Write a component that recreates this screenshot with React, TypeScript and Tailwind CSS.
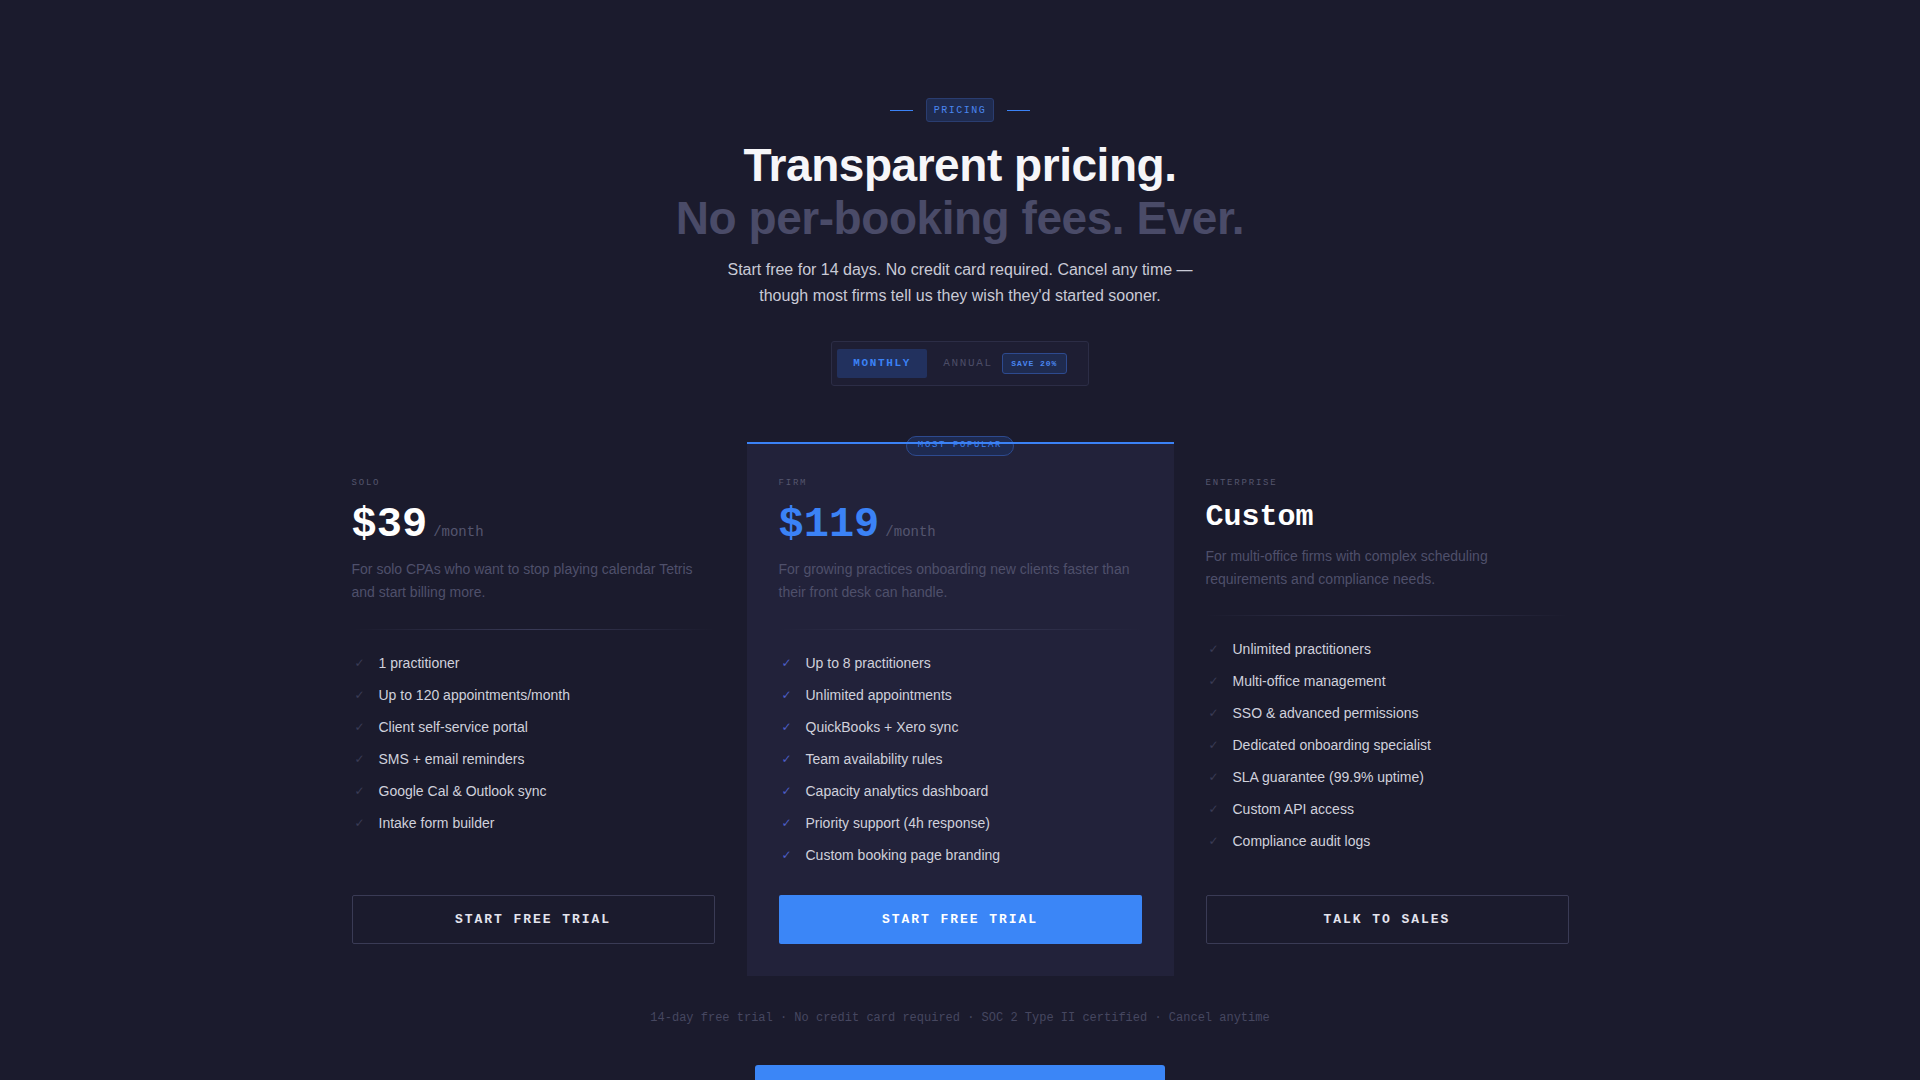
import clsx from "clsx";

type Plan = {
  tier: string;
  price: string;
  per?: string;
  desc: string;
  features: string[];
  cta: string;
  featured?: boolean;
};

const plans: Plan[] = [
  {
    tier: "SOLO",
    price: "$39",
    per: "/month",
    desc: "For solo CPAs who want to stop playing calendar Tetris and start billing more.",
    features: [
      "1 practitioner",
      "Up to 120 appointments/month",
      "Client self-service portal",
      "SMS + email reminders",
      "Google Cal & Outlook sync",
      "Intake form builder",
    ],
    cta: "START FREE TRIAL",
  },
  {
    tier: "FIRM",
    price: "$119",
    per: "/month",
    desc: "For growing practices onboarding new clients faster than their front desk can handle.",
    features: [
      "Up to 8 practitioners",
      "Unlimited appointments",
      "QuickBooks + Xero sync",
      "Team availability rules",
      "Capacity analytics dashboard",
      "Priority support (4h response)",
      "Custom booking page branding",
    ],
    cta: "START FREE TRIAL",
    featured: true,
  },
  {
    tier: "ENTERPRISE",
    price: "Custom",
    desc: "For multi-office firms with complex scheduling requirements and compliance needs.",
    features: [
      "Unlimited practitioners",
      "Multi-office management",
      "SSO & advanced permissions",
      "Dedicated onboarding specialist",
      "SLA guarantee (99.9% uptime)",
      "Custom API access",
      "Compliance audit logs",
    ],
    cta: "TALK TO SALES",
  },
];

const mono = "font-['Liberation_Mono',monospace]";

function PlanCard({ plan }: { plan: Plan }) {
  const custom = !plan.per;
  return (
    <div className={clsx("relative flex flex-col px-8 pb-8 pt-[34px]", plan.featured && "bg-[#22223a]")}>
      {plan.featured && (
        <>
          <div className="absolute left-0 right-0 top-0 z-10 h-[2px] bg-[#3b82f6]" />
          <div
            className={clsx(
              mono,
              "absolute left-1/2 top-[-6px] flex h-5 w-[108px] -translate-x-1/2 items-center justify-center rounded-full border border-[#2d4a8f] bg-[#1e2a50] text-[9px] tracking-[0.18em] text-[#3b82f6]"
            )}
          >
            MOST POPULAR
          </div>
        </>
      )}

      <div className={clsx(mono, "text-[9px] leading-[14px] tracking-[0.2em] text-[#55566e]")}>
        {plan.tier}
      </div>

      {custom ? (
        <div className={clsx(mono, "mt-[9px] text-[30px] font-bold leading-[36px] text-white")}>
          {plan.price}
        </div>
      ) : (
        <div className="mt-3.5 flex items-baseline gap-1.5">
          <span
            className={clsx(
              mono,
              "text-[42px] font-bold leading-[42px]",
              plan.featured ? "text-[#3b82f6]" : "text-white"
            )}
          >
            {plan.price}
          </span>
          <span className={clsx(mono, "text-[14px] text-[#55566f]")}>{plan.per}</span>
        </div>
      )}

      <p
        className={clsx(
          "font-['Liberation_Sans',Arial,sans-serif] text-[14px] leading-[23px] text-[#4f506b]",
          custom ? "mt-2.5 pr-14" : "mt-3"
        )}
      >
        {plan.desc}
      </p>

      <div
        className={clsx(
          "h-px bg-gradient-to-r from-transparent via-[#393a56] to-transparent",
          custom ? "mt-6" : "mt-[25px]"
        )}
      />

      <ul className="mt-[17px] mb-6 flex flex-col">
        {plan.features.map((f) => (
          <li key={f} className="flex h-8 items-center gap-[11px]">
            <span
              className={clsx(
                "flex w-4 justify-center font-['DejaVu_Sans',sans-serif] text-[12px]",
                plan.featured ? "text-[#4d5ec6]" : "text-[#3a3b55]"
              )}
            >
              ✓
            </span>
            <span className="font-['Liberation_Sans',Arial,sans-serif] text-[14px] text-[#d0d1dc]">{f}</span>
          </li>
        ))}
      </ul>

      <button
        className={clsx(
          mono,
          "mt-auto h-[49px] w-full rounded-[2px] text-[13px] font-bold tracking-[0.15em]",
          plan.featured
            ? "bg-[#3b86f7] text-white"
            : "border border-[#3a3b55] bg-transparent text-[#e4e4ee]"
        )}
      >
        {plan.cta}
      </button>
    </div>
  );
}

export default function App() {
  return (
    <div className="min-h-screen bg-[#1b1b2d] pt-[98px] font-['Liberation_Sans',Arial,sans-serif]">
      <section className="flex flex-col items-center">
        <div className="flex items-center gap-[13px]">
          <span className="h-px w-[23px] bg-[#3b82f6]" />
          <span
            className={clsx(
              mono,
              "flex h-6 items-center rounded-[3px] border border-[#2a3d70] bg-[#1f2b4f] px-[7px] text-[10px] tracking-[0.15em] text-[#4a86f0]"
            )}
          >
            PRICING
          </span>
          <span className="h-px w-[23px] bg-[#3b82f6]" />
        </div>

        <h1 className="mt-[17px] text-center text-[46px] font-bold leading-[53px] tracking-[-0.01em]">
          <span className="block text-[#f6f6f9]">Transparent pricing.</span>
          <span className="block text-[#4a4b68]">No per-booking fees. Ever.</span>
        </h1>

        <p className="mt-3 text-center text-[16px] leading-[26px] text-[#c9cad6]">
          Start free for 14 days. No credit card required. Cancel any time —
          <br />
          though most firms tell us they wish they'd started sooner.
        </p>

        <div className="mt-8 flex items-center rounded-[3px] border border-[#2c2d46] bg-[#1e1e33] p-[7px_5px]">
          <button
            className={clsx(
              mono,
              "flex h-[29px] w-[90px] items-center justify-center rounded-[2px] bg-[#22315e] text-[11px] font-bold tracking-[0.15em] text-[#3b82f6]"
            )}
          >
            MONTHLY
          </button>
          <button className="flex items-center gap-[9px] px-4">
            <span className={clsx(mono, "text-[11px] tracking-[0.15em] text-[#4c4d67]")}>ANNUAL</span>
            <span
              className={clsx(
                mono,
                "flex h-[21px] w-[65px] items-center justify-center rounded-[3px] border border-[#2d4a8f] bg-[#1f2b4f] text-[8px] font-bold tracking-[0.12em] text-[#4a86f0]"
              )}
            >
              SAVE 20%
            </span>
          </button>
        </div>

        <div className="mt-14 grid w-[1281px] grid-cols-3">
          {plans.map((p) => (
            <PlanCard key={p.tier} plan={p} />
          ))}
        </div>

        <p className={clsx(mono, "mt-[33px] text-[12px] leading-[18px] text-[#464760]")}>
          14-day free trial · No credit card required · SOC 2 Type II certified · Cancel anytime
        </p>

        <div className="mt-[38px] h-14 w-[410px] rounded-t-[3px] bg-[#3b86f7]" />
      </section>
    </div>
  );
}
